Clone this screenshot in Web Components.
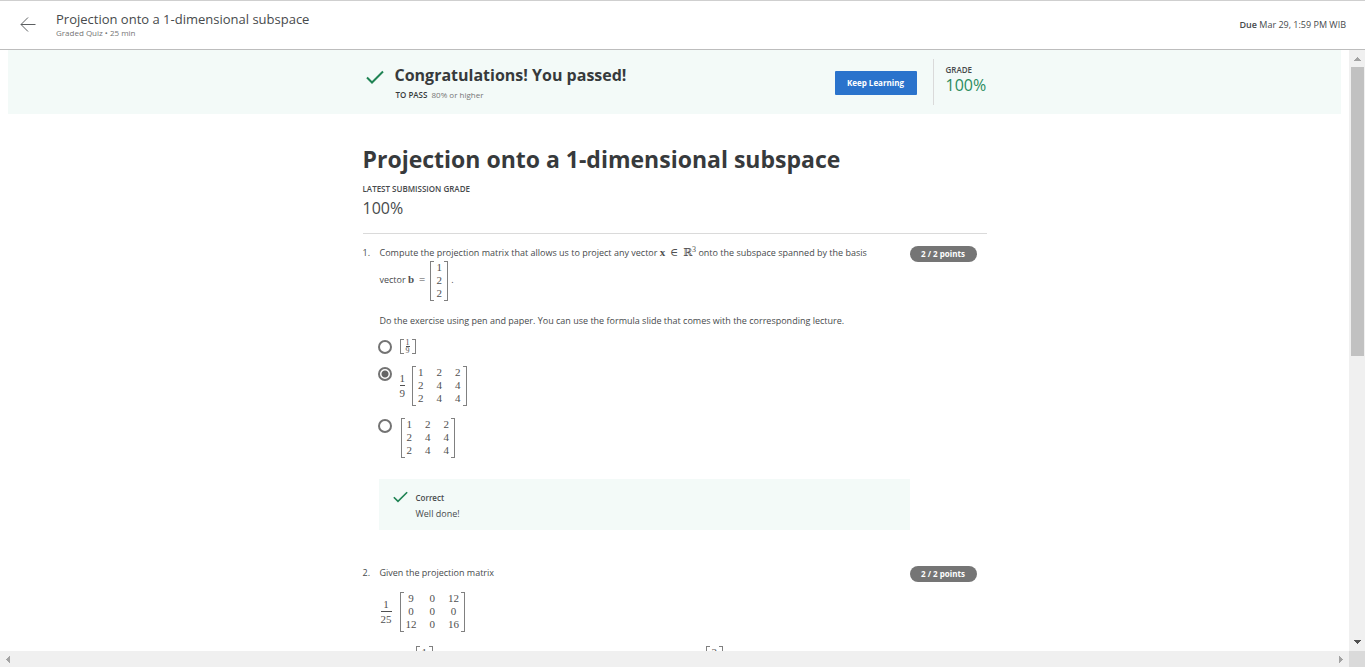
<!DOCTYPE html>
<html lang="en">
<head>
<meta charset="utf-8">
<title>Projection onto a 1-dimensional subspace</title>
<style>
  html, body { margin: 0; height: 100%; }
  body { font: 9px/16px "Open Sans", "Noto Sans", sans-serif; color: #474a4c; background: #fff; overflow: hidden; }
</style>
</head>
<body>
<quiz-app>
  <quiz-header slot="header" kind="Graded Quiz • 25 min" due="Mar 29, 1:59 PM WIB">Projection onto a 1-dimensional subspace</quiz-header>
  <pass-banner grade="100%" required="80% or higher">Congratulations! You passed!</pass-banner>
  <quiz-sheet grade="100%">
    <span slot="title">Projection onto a 1-dimensional subspace</span>
    <quiz-question number="1." points="2 / 2 points">
      <quiz-text>Compute the projection matrix that allows us to project any vector <math-run><b>x</b> <i>∈</i> ℝ<sup>3</sup></math-run> onto the subspace spanned by the basis<br>vector <math-run><b>b</b> <i>=</i></math-run> <math-matrix rows="1;2;2"></math-matrix> .</quiz-text>
      <quiz-text class="gap">Do the exercise using pen and paper. You can use the formula slide that comes with the corresponding lecture.</quiz-text>
      <answer-list>
        <answer-option name="q1"><math-matrix small rows="1/9"></math-matrix></answer-option>
        <answer-option name="q1" checked><math-fraction top="1" bottom="9"></math-fraction><math-matrix rows="1 2 2;2 4 4;2 4 4"></math-matrix></answer-option>
        <answer-option name="q1"><math-matrix rows="1 2 2;2 4 4;2 4 4"></math-matrix></answer-option>
      </answer-list>
      <answer-feedback verdict="Correct">Well done!</answer-feedback>
    </quiz-question>
    <quiz-question number="2." points="2 / 2 points">
      <quiz-text>Given the projection matrix</quiz-text>
      <math-row><math-fraction top="1" bottom="25"></math-fraction><math-matrix rows="9 0 12;0 0 0;12 0 16"></math-matrix></math-row>
      <vector-pair><math-matrix rows="1"></math-matrix><math-matrix rows="2"></math-matrix></vector-pair>
    </quiz-question>
  </quiz-sheet>
</quiz-app>

<script>
const define = (name, render) => customElements.define(name, class extends HTMLElement {
  constructor() {
    super();
    this.attachShadow({ mode: "open" }).innerHTML = render(this);
  }
});
const attr = (el, name) => el.getAttribute(name) || "";

define("quiz-app", () => `
  <style>
    :host { display: grid; height: 100vh; grid-template: auto minmax(0, 1fr) 16px / minmax(0, 1fr) 16px; }
    .top { grid-column: 1 / -1; }
    main { overflow: hidden; padding: 0 8px; }
    .corner { background: #dadada; }
  </style>
  <div class="top"><slot name="header"></slot></div>
  <main><slot></slot></main>
  <scroll-rail direction="vertical"></scroll-rail>
  <scroll-rail direction="horizontal"></scroll-rail>
  <div class="corner"></div>`);

define("scroll-rail", el => attr(el, "direction") === "vertical" ? `
  <style>
    :host { display: flex; flex-direction: column; align-items: center; background: #f0f0f0; }
    svg { flex: none; width: 16px; height: 17px; display: block; }
    .track { flex: 1; width: 13px; }
    .thumb { height: 51%; background: #c1c1c1; }
  </style>
  <svg viewBox="0 0 16 17" shape-rendering="crispEdges"><path fill="#a3a3a3" d="M8 7h1v1h1v1h1v1h1v1H5v-1h1V9h1V8h1z"/></svg>
  <div class="track"><div class="thumb"></div></div>
  <svg viewBox="0 0 16 17" shape-rendering="crispEdges"><path fill="#505050" d="M5 6h7v1h-1v1h-1v1H9v1H8V9H7V8H6V7H5z"/></svg>` : `
  <style>
    :host { display: flex; justify-content: space-between; background: #f0f0f0; }
    svg { width: 17px; height: 16px; display: block; }
  </style>
  <svg viewBox="0 0 17 16" shape-rendering="crispEdges"><path fill="#a3a3a3" d="M10 5v7H9v-1H8v-1H7V9H6V8h1V7h1V6h1V5z"/></svg>
  <svg viewBox="0 0 17 16" shape-rendering="crispEdges"><path fill="#a3a3a3" d="M7 5v7h1v-1h1v-1h1V9h1V8h-1V7H9V6H8V5z"/></svg>`);

define("quiz-header", el => `
  <style>
    :host { display: flex; align-items: center; box-sizing: border-box; height: 50px; padding: 0 19px 0 20px;
      border-top: 1px solid #cfcfcf; border-bottom: 1px solid #bdbdbd; }
    a { display: block; width: 16px; height: 16px; margin-right: 20px; }
    svg { display: block; }
    .names { flex: 1; }
    h1 { margin: 0; font-weight: 400; font-size: 13px; line-height: 16px; }
    p { margin: 0; font-size: 8px; line-height: 12px; color: #757575; }
    .due b { font-weight: 600; }
  </style>
  <a href="#" aria-label="Back"><svg width="16" height="16" viewBox="0 0 16 16" fill="none" stroke="#5c5f61"><path d="M8 .5L1 7.5l7 7M1 7.5h14.5"/></svg></a>
  <div class="names"><h1><slot></slot></h1><p>${attr(el, "kind")}</p></div>
  <div class="due"><b>Due</b> ${attr(el, "due")}</div>`);

define("check-mark", () => `
  <style>:host { display: block; } svg { display: block; width: 100%; height: auto; }</style>
  <svg viewBox="0 0 18 14" fill="none" stroke="#1f8354" stroke-width="2"><path d="M1 7.5l5 5L17 1.5"/></svg>`);

define("pass-banner", el => `
  <style>
    :host { display: block; background: #f3faf8; }
    .row { box-sizing: border-box; height: 64px; max-width: 624px; margin: 0 auto; display: flex; align-items: center; padding-left: 3px; }
    check-mark { width: 18px; margin: 0 11px 10px 0; }
    .text { flex: 1; padding-top: 2px; }
    h2 { margin: 0; font-size: 16px; line-height: 24px; font-weight: 700; color: #373a3c; }
    p { margin: 0; padding-left: 1px; line-height: 16px; font-size: 8px; color: #757575; }
    p b { font-weight: 600; color: #373a3c; margin-right: 2px; }
    button { width: 82px; height: 24px; margin: 2px 16px 0 0; padding: 0; border: 0; border-radius: 1px; background: #2a73cc; color: #fff; font: 700 8px/16px "Open Sans", sans-serif; }
    .grade { box-sizing: border-box; width: 54px; height: 46px; padding: 4px 0 0 12px; border-left: 1px solid #dadada; }
    .grade b { display: block; font-size: 8px; line-height: 14px; font-weight: 600; }
    .grade span { display: block; font-size: 16px; line-height: 16px; color: #2a8c5f; }
  </style>
  <div class="row">
    <check-mark></check-mark>
    <div class="text"><h2><slot></slot></h2><p><b>TO PASS</b> ${attr(el, "required")}</p></div>
    <button type="button">Keep Learning</button>
    <div class="grade"><b>GRADE</b><span>${attr(el, "grade")}</span></div>
  </div>`);

define("quiz-sheet", el => `
  <style>
    :host { display: block; max-width: 624px; margin: 27px auto 0; }
    h2 { margin: 0; font-size: 23px; line-height: 36px; font-weight: 700; color: #373a3c; }
    .label { font-size: 8px; line-height: 16px; font-weight: 600; margin-top: 4px; }
    .grade { font-size: 16px; line-height: 22px; }
    hr { margin: 14px 0 11px; border: 0; border-top: 1px solid #dadada; }
  </style>
  <h2><slot name="title"></slot></h2>
  <div class="label">LATEST SUBMISSION GRADE</div>
  <div class="grade">${attr(el, "grade")}</div>
  <hr>
  <slot></slot>`);

define("quiz-question", el => `
  <style>
    :host { display: grid; grid-template-columns: 16px minmax(0, 1fr) auto; padding-right: 10px; margin-bottom: 35px; }
    .badge { width: 67px; height: 16px; margin-top: 1px; border-radius: 8px; background: #757575; color: #fff; font-weight: 700; font-size: 8px; line-height: 16px; text-align: center; }
  </style>
  <div>${attr(el, "number")}</div>
  <div><slot></slot></div>
  <div class="badge">${attr(el, "points")}</div>`);

define("quiz-text", () => `
  <style>
    :host { display: block; padding-left: 1px; }
    :host(.gap) { margin-top: 12px; }
  </style>
  <slot></slot>`);

define("math-run", () => `
  <style>
    :host { font: 11px/12px "Liberation Serif", "DejaVu Serif", serif; white-space: nowrap; color: #505050; }
    ::slotted(i) { font-style: normal; margin: 0 2px; }
    ::slotted(sup) { font-size: 8px; line-height: 0; vertical-align: 4px; }
  </style>
  <slot></slot>`);

const fractionCell = text => {
  const [top, bottom] = text.split("/");
  return bottom ? `<math-fraction small top="${top}" bottom="${bottom}"></math-fraction>` : text;
};
define("math-matrix", el => {
  const rows = attr(el, "rows").split(";").map(row => row.split(" "));
  return `
  <style>
    :host { display: inline-grid; vertical-align: middle; position: relative; box-sizing: border-box;
      grid-template-columns: repeat(${rows[0].length}, max-content); column-gap: 13px; justify-items: center;
      margin: 0 1px; padding: 0 6px 1px; font: 11px/13px "Liberation Serif", serif; color: #505050; }
    :host([small]) { margin: 0; padding: 0 6px; }
    :host::before, :host::after { content: ""; position: absolute; top: 0; bottom: 0; width: 3px; border: 1px solid #808080; }
    :host::before { left: 0; border-right: 0; }
    :host::after { right: 0; border-left: 0; }
  </style>
  ${rows.flat().map(cell => `<span>${fractionCell(cell)}</span>`).join("")}`;
});

define("math-fraction", el => `
  <style>
    :host { display: inline-block; font: 11px/13px "Liberation Serif", serif; text-align: center; color: #505050; }
    span { display: block; }
    span + span { border-top: 1px solid #505050; padding-top: 1px; }
    :host([small]) { display: block; font-size: 8px; line-height: 7px; }
    :host([small]) span + span { padding-top: 0; }
  </style>
  <span>${attr(el, "top")}</span><span>${attr(el, "bottom")}</span>`);

define("answer-list", () => `
  <style>:host { display: grid; row-gap: 12px; margin-top: 10px; }</style>
  <slot></slot>`);

define("answer-option", el => `
  <style>
    :host { display: block; }
    label { display: flex; align-items: flex-start; }
    input { appearance: none; box-sizing: border-box; flex: none; width: 14px; height: 14px; margin: 1px 7px 0 -1px; border: 2px solid #737373; border-radius: 50%; background: #fff; }
    input:checked { background: radial-gradient(circle, #666 0 3px, #fff 4px); }
    .body { display: flex; align-items: center; gap: 6px; padding-left: 1px; }
  </style>
  <label><input type="radio" name="${attr(el, "name")}"${el.hasAttribute("checked") ? " checked" : ""}><span class="body"><slot></slot></span></label>`);

define("answer-feedback", el => `
  <style>
    :host { display: flex; box-sizing: border-box; margin-top: 21px; padding: 11px 14px 8px; background: #f3faf8; }
    check-mark { width: 15px; margin: 1px 8px 0 0; }
    b { display: block; font-weight: 600; font-size: 8px; }
  </style>
  <check-mark></check-mark>
  <div><b>${attr(el, "verdict")}</b><slot></slot></div>`);

define("math-row", () => `
  <style>:host { display: flex; align-items: center; gap: 7px; margin-top: 11px; padding-left: 2px; }</style>
  <slot></slot>`);

define("vector-pair", () => `
  <style>:host { display: grid; grid-template-columns: 290px 1fr; justify-items: start; margin-top: 14px; padding-left: 36px; }</style>
  <slot></slot>`);
</script>
</body>
</html>
